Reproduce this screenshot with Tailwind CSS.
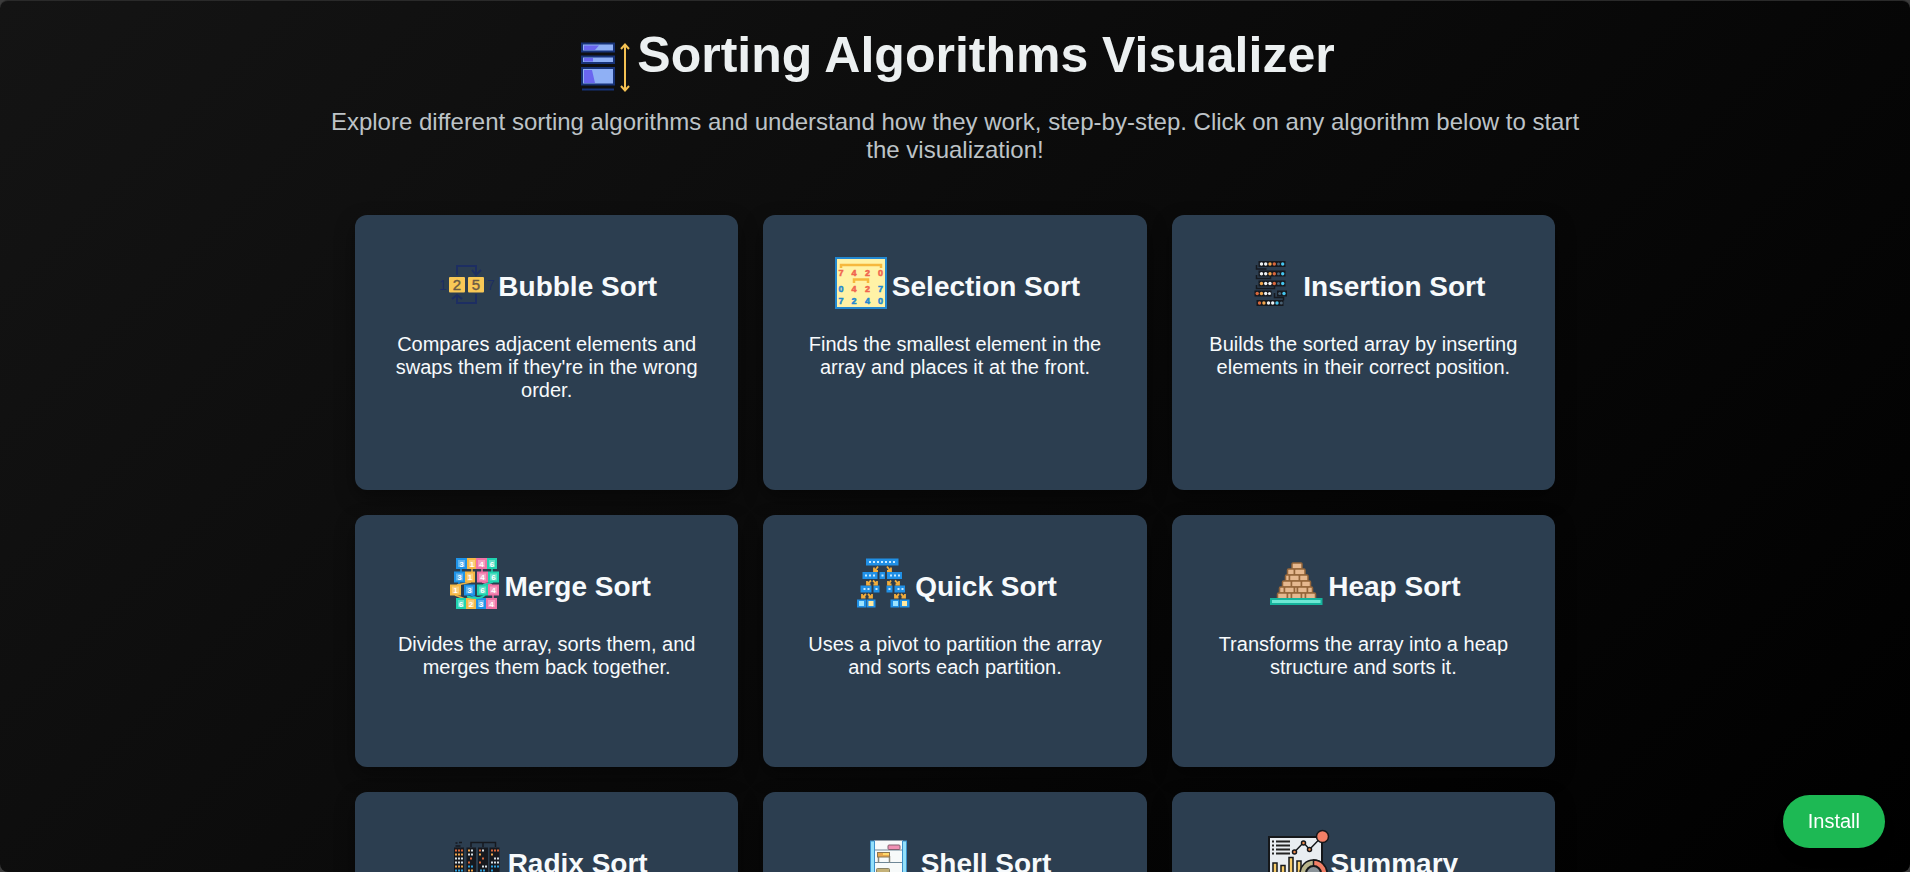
<!DOCTYPE html>
<html lang="en">
<head>
  <meta charset="UTF-8">
  <meta name="viewport" content="width=device-width, initial-scale=1.0">
  <title>Sorting Algorithms Visualizer</title>
  <script src="https://cdn.jsdelivr.net/npm/@tailwindcss/browser@4"></script>
</head>
<body class="bg-[#3c3c3c] font-['Liberation_Sans',Arial,sans-serif]">

  <div class="h-screen overflow-y-auto [scrollbar-width:none] rounded-lg border-t border-[#2a2a2a] bg-[linear-gradient(135deg,#141414,#000000)] px-5 pt-6 pb-10 text-center">

    <header class="mx-auto max-w-[1250px]">
      <h1 class="text-[50px] leading-[60px] font-bold text-[#ecf0f1]"><svg class="inline size-[60px] align-[-24px] mr-0.5" viewBox="0 0 60 60" aria-hidden="true">
          <g fill="#8fb0f5" stroke="#173277" stroke-width="2">
            <rect x="7" y="7.500" width="32" height="8"/>
            <rect x="7" y="20.500" width="32" height="6.500"/>
            <rect x="7" y="32" width="32" height="16.500"/>
          </g>
          <path d="M9 9.500h15l-4 4.500H9zM9 22h9v3.500H9zM9 34h8l3 13H9z" fill="#6a66f0"/>
          <path d="M7 53.500h32" stroke="#173277" stroke-width="2"/>
          <path d="M50 9v45M46 13l4-4.500 4 4.500M46 50l4 4.500 4-4.500" fill="none" stroke="#f4c152" stroke-width="2"/>
        </svg>Sorting Algorithms Visualizer</h1>
      <p class="mt-3 text-[24px] leading-[28px] text-[#bdc3c7]">Explore different sorting algorithms and understand how they work, step-by-step. Click on any algorithm below to start the visualization!</p>
    </header>

    <main class="mx-auto mt-[51px] grid max-w-[1200px] grid-cols-3 gap-[25px] text-[#f7fafc]">

      <a href="#bubble" class="rounded-xl bg-[#2c3e50] px-[35px] pt-[38px] pb-[88px] shadow-[0_8px_20px_rgba(0,0,0,0.4)]">
        <h2 class="text-[28px] leading-8 font-bold"><svg class="inline size-[60px] align-[-17px] mr-0.5" viewBox="0 0 60 60" aria-hidden="true">
            <g fill="none" stroke="#1d2e62" stroke-width="2">
              <path d="M21 22v-9h19v7M36 17l4 5 5-5"/>
              <path d="M40 41v9H21v-7M16 46l5-4 5 4"/>
            </g>
            <rect x="13" y="24" width="16" height="15.500" rx="1" fill="#f9c856"/>
            <rect x="32" y="24" width="16" height="15.500" rx="1" fill="#f9c856"/>
            <g font-size="15" text-anchor="middle" font-weight="normal" fill="#6b5b45" stroke="#6b5b45" stroke-width=".4">
              <text x="21" y="37">2</text>
              <text x="40" y="37">5</text>
            </g>
            <g font-size="14" text-anchor="middle" font-weight="normal" fill="#1d2e62">
              <text x="7" y="37">1</text>
              <text x="55" y="37">7</text>
            </g>
          </svg>Bubble Sort</h2>
        <p class="mt-5 text-[20px] leading-[23px]">Compares adjacent elements and swaps them if they're in the wrong order.</p>
      </a>

      <a href="#selection" class="rounded-xl bg-[#2c3e50] px-[35px] pt-[38px] pb-[88px] shadow-[0_8px_20px_rgba(0,0,0,0.4)]">
        <h2 class="text-[28px] leading-8 font-bold"><svg class="inline size-[60px] align-[-17px] mr-0.5" viewBox="0 0 60 60" aria-hidden="true">
            <rect x="6" y="5" width="50" height="50" fill="#fff2a6" stroke="#2388d0" stroke-width="2"/>
            <path d="M11 15v-3h40v3M24 30v-3.500h14V30" fill="none" stroke="#f6b83d" stroke-width="2.500"/>
            <g font-size="9" font-weight="bold" text-anchor="middle" fill="#f0654f" stroke="#f0654f" stroke-width=".5">
              <text x="11" y="22.500">7</text><text x="24" y="22.500">4</text><text x="37.500" y="22.500">2</text><text x="50.500" y="22.500">0</text>
              <text x="24" y="39">4</text><text x="37.500" y="39">2</text>
            </g>
            <g font-size="9" font-weight="bold" text-anchor="middle" fill="#2388d0" stroke="#2388d0" stroke-width=".5">
              <text x="11" y="39">0</text><text x="50.500" y="39">7</text>
              <text x="11" y="51">7</text><text x="24" y="51">2</text><text x="37.500" y="51">4</text><text x="50.500" y="51">0</text>
            </g>
          </svg>Selection Sort</h2>
        <p class="mt-5 text-[20px] leading-[23px]">Finds the smallest element in the array and places it at the front.</p>
      </a>

      <a href="#insertion" class="rounded-xl bg-[#2c3e50] px-[35px] pt-[38px] pb-[88px] shadow-[0_8px_20px_rgba(0,0,0,0.4)]">
        <h2 class="text-[28px] leading-8 font-bold"><svg class="inline size-[60px] align-[-17px] mr-0.5" viewBox="0 0 60 60" aria-hidden="true">
            <g fill="#16191f">
              <rect x="17.500" y="8" width="27" height="6"/>
              <rect x="17.500" y="17.500" width="27" height="6"/>
              <rect x="17.500" y="27.500" width="27" height="6"/>
              <rect x="13.500" y="37.500" width="17" height="6"/>
              <rect x="36" y="37.500" width="10" height="6"/>
              <rect x="15.500" y="47" width="27" height="6"/>
            </g>
            <path d="M15.500 12v4h10M15.500 22v3.500h14v-3M15.500 32v3.500h18v-3M33.500 40v4.500h9v3" fill="none" stroke="#16191f" stroke-width="1.500"/>
            <g fill="#eef1f3">
              <circle cx="20.500" cy="11" r="1.700"/><circle cx="24.700" cy="11" r="1.700"/>
              <circle cx="20.500" cy="20.700" r="1.700"/><circle cx="24.700" cy="20.700" r="1.700"/>
              <circle cx="24.700" cy="30.500" r="1.700"/><circle cx="29" cy="30.500" r="1.700"/>
              <circle cx="24.700" cy="40.500" r="1.700"/><circle cx="28.500" cy="40.500" r="1.500"/>
              <circle cx="27.500" cy="50" r="1.700"/><circle cx="31.700" cy="50" r="1.700"/>
            </g>
            <g fill="#f1a64d">
              <circle cx="29" cy="11" r="1.700"/><circle cx="29" cy="20.700" r="1.700"/>
              <circle cx="20.500" cy="30.500" r="1.700"/><circle cx="20.500" cy="40.500" r="1.700"/><circle cx="22.900" cy="50" r="1.700"/>
            </g>
            <g fill="#d9683c">
              <circle cx="33.300" cy="11" r="1.700"/><circle cx="33.300" cy="20.700" r="1.700"/>
              <circle cx="33.300" cy="30.500" r="1.700"/><circle cx="16.200" cy="40.500" r="1.700"/><circle cx="18.500" cy="50" r="1.700"/>
            </g>
            <g fill="#4a6275">
              <circle cx="37.500" cy="11" r="1.500"/><circle cx="37.500" cy="20.700" r="1.500"/>
              <circle cx="37.500" cy="30.500" r="1.500"/><circle cx="38.700" cy="40.500" r="1.500"/><circle cx="40.300" cy="50" r="1.500"/>
            </g>
            <g fill="#45c4ee">
              <circle cx="41.700" cy="11" r="1.700"/><circle cx="41.700" cy="20.700" r="1.700"/>
              <circle cx="41.700" cy="30.500" r="1.700"/><circle cx="43" cy="40.500" r="1.700"/><circle cx="36" cy="50" r="1.700"/>
            </g>
          </svg>Insertion Sort</h2>
        <p class="mt-5 text-[20px] leading-[23px]">Builds the sorted array by inserting elements in their correct position.</p>
      </a>

      <a href="#merge" class="rounded-xl bg-[#2c3e50] px-[35px] pt-[38px] pb-[88px] shadow-[0_8px_20px_rgba(0,0,0,0.4)]">
        <h2 class="text-[28px] leading-8 font-bold"><svg class="inline size-[60px] align-[-17px] mr-0.5" viewBox="0 0 60 60" aria-hidden="true">
            <g fill="none" stroke-width="1.500">
              <path d="M28 29l-14 3M29 15v4M12 42l10 4" stroke="#e9b44a"/>
              <path d="M18 15v4M16 29v2M28 42l8 4" stroke="#1e93e8"/>
              <path d="M39 15v4M39 29l10 3M50 42v4" stroke="#f173a6"/>
              <path d="M49 15v4M50 29l-10 3" stroke="#20d3b0"/>
            </g>
            <g fill="#1e93e8">
              <rect x="13" y="5" width="11" height="11"/><rect x="11" y="18.500" width="11" height="11"/>
              <rect x="21" y="31.500" width="11" height="11"/><rect x="33" y="45" width="10" height="11"/>
            </g>
            <g fill="#f6b844">
              <rect x="24" y="5" width="10" height="11"/><rect x="22" y="18.500" width="10" height="11"/>
              <rect x="7" y="31.500" width="11" height="11"/><rect x="23" y="45" width="10" height="11"/>
            </g>
            <g fill="#f173a6">
              <rect x="33" y="5" width="11" height="11"/><rect x="34" y="18.500" width="11" height="11"/>
              <rect x="45" y="31.500" width="11" height="11"/><rect x="43" y="45" width="11" height="11"/>
            </g>
            <g fill="#20d3b0">
              <rect x="44" y="5" width="10" height="11"/><rect x="45" y="18.500" width="11" height="11"/>
              <rect x="34" y="31.500" width="11" height="11"/><rect x="13" y="45" width="10" height="11"/>
            </g>
            <path d="M24 43.500q14 4 18-2" fill="none" stroke="#20d3b0" stroke-width="2"/>
            <g fill="#fff" fill-opacity=".3">
              <path d="M15 7h7v7h-7zM26 7h6v7h-6zM35 7h7v7h-7zM46 7h6v7h-6z"/>
              <path d="M13 20.500h7v7h-7zM24 20.500h6v7h-6zM36 20.500h7v7h-7zM47 20.500h7v7h-7z"/>
              <path d="M9 33.500h7v7H9zM23 33.500h7v7h-7zM36 33.500h7v7h-7zM47 33.500h7v7h-7z"/>
              <path d="M15 47h6v7h-6zM25 47h6v7h-6zM35 47h6v7h-6zM45 47h7v7h-7z"/>
            </g>
            <g font-size="8" font-weight="bold" text-anchor="middle" fill="#fff">
              <text x="18.500" y="13.500">3</text><text x="29" y="13.500">1</text><text x="38.500" y="13.500">4</text><text x="49" y="13.500">6</text>
              <text x="16.500" y="27">3</text><text x="27" y="27">1</text><text x="39.500" y="27">4</text><text x="50.500" y="27">6</text>
              <text x="12.500" y="40">1</text><text x="26.500" y="40">3</text><text x="39.500" y="40">6</text><text x="50.500" y="40">4</text>
              <text x="18" y="53.500">6</text><text x="28" y="53.500">2</text><text x="38" y="53.500">3</text><text x="48.500" y="53.500">4</text>
            </g>
          </svg>Merge Sort</h2>
        <p class="mt-5 text-[20px] leading-[23px]">Divides the array, sorts them, and merges them back together.</p>
      </a>

      <a href="#quick" class="rounded-xl bg-[#2c3e50] px-[35px] pt-[38px] pb-[88px] shadow-[0_8px_20px_rgba(0,0,0,0.4)]">
        <h2 class="text-[28px] leading-8 font-bold"><svg class="inline size-[60px] align-[-17px] mr-0.5" viewBox="0 0 60 60" aria-hidden="true">
            <g fill="#2090e6">
              <path d="M13 5.500h32.500v7H13z"/>
              <path d="M9.500 19h15v7h-15zM26.500 19h5.500v7h-5.500zM34 19h15v7H34z"/>
              <path d="M7.500 32.500h11v7h-11zM20.500 32.500h6v7h-6zM33.500 32.500h6v7h-6zM41.500 32.500h10.500v7H41.500z"/>
              <path d="M4 46.500h9v8H4zM13.500 46.500h9v8h-9zM37.500 46.500h9v8h-9zM47 46.500h9.500v8H47z"/>
            </g>
            <g stroke="#c6eaff" stroke-width="2" stroke-dasharray="2 2">
              <path d="M16 9h27M12 22.500h11M28.500 22.500h2M37 22.500h11M10.500 36h7M22.500 36h2M35.500 36h2M44.500 36h6"/>
            </g>
            <g fill="#9be3ff"><path d="M6 48h5v5H6zM40 48h5v5h-5z"/></g>
            <g fill="#ffe9a0"><path d="M15.500 48h5v5h-5zM49 48h5v5h-5z"/></g>
            <g fill="none" stroke="#f2ad3c" stroke-width="1.800">
              <path d="M25 13.500l-3 4M21 14.500v3.500h4M34 13.500l3 4M38 14.500v3.500h-4"/>
              <path d="M18 27.500l-3 3M14 28v3.500h3.500M20 27.500l3 3M24 28v3.500h-3.500M38 27.500l-2 3M35 28v3.500h3.500M42 27.500l3 3M46 28v3.500h-3.500"/>
              <path d="M13 41l-3 3M9 41v3.500h3.500M15 41l3 3M19 41v3.500h-3.500M46 41l-3 3M42 41v3.500h3.500M48 41l3 3M52 41v3.500h-3.500"/>
            </g>
          </svg>Quick Sort</h2>
        <p class="mt-5 text-[20px] leading-[23px]">Uses a pivot to partition the array and sorts each partition.</p>
      </a>

      <a href="#heap" class="rounded-xl bg-[#2c3e50] px-[35px] pt-[38px] pb-[88px] shadow-[0_8px_20px_rgba(0,0,0,0.4)]">
        <h2 class="text-[28px] leading-8 font-bold"><svg class="inline size-[60px] align-[-17px] mr-0.5" viewBox="0 0 60 60" aria-hidden="true">
            <g fill="#e6b88f" stroke="#94653a" stroke-width="1.500">
              <rect x="26" y="10" width="10" height="6" rx="1"/>
              <rect x="21.500" y="16" width="7" height="6" rx="1"/><rect x="28.500" y="16" width="10.500" height="6" rx="1"/>
              <rect x="19.500" y="22" width="4" height="6" rx="1"/><rect x="23.500" y="22" width="10" height="6" rx="1"/><rect x="33.500" y="22" width="8.500" height="6" rx="1"/>
              <rect x="16.500" y="28" width="9" height="6" rx="1"/><rect x="25.500" y="28" width="10" height="6" rx="1"/><rect x="35.500" y="28" width="9" height="6" rx="1"/>
              <rect x="13.500" y="34" width="5" height="6" rx="1"/><rect x="18.500" y="34" width="10" height="6" rx="1"/><rect x="28.500" y="34" width="3" height="6" rx="1"/><rect x="31.500" y="34" width="10" height="6" rx="1"/><rect x="41.500" y="34" width="5" height="6" rx="1"/>
              <rect x="11.500" y="40" width="10" height="6" rx="1"/><rect x="21.500" y="40" width="4" height="6" rx="1"/><rect x="25.500" y="40" width="10" height="6" rx="1"/><rect x="35.500" y="40" width="4" height="6" rx="1"/><rect x="39.500" y="40" width="10" height="6" rx="1"/>
            </g>
            <rect x="5" y="46" width="50.500" height="5" fill="#6ee8d4" stroke="#16b39c" stroke-width="2"/>
          </svg>Heap Sort</h2>
        <p class="mt-5 text-[20px] leading-[23px]">Transforms the array into a heap structure and sorts it.</p>
      </a>

      <a href="#radix" class="rounded-xl bg-[#2c3e50] px-[35px] pt-[38px] pb-[88px] shadow-[0_8px_20px_rgba(0,0,0,0.4)]">
        <h2 class="text-[28px] leading-8 font-bold"><svg class="inline size-[60px] align-[-17px] mr-0.5" viewBox="0 0 60 60" aria-hidden="true">
            <path d="M25 17v-4.500h24.500V17M37 12.500V17M9.500 13h2M13 12.500h3M9.500 16h5" fill="none" stroke="#16191f" stroke-width="1.500"/>
            <path d="M8 17.500h10V54H8zM20.500 17.500h9.500V54h-9.500zM32 17.500h10V54H32zM43.500 17.500h10V54h-10z" fill="#16191f"/>
            <g fill="none" stroke-width="2" stroke-dasharray="2 1">
              <path d="M9 20.500h8M33 20.500h3M45 20.500h8M24 28.500h3M36 28.500h3M22 32.500h3M33 32.500h3" stroke="#d9683c"/>
              <path d="M9 24.500h8M22 20.500h3M45 24.500h3M33 24.500h3M9 36.500h8M22 40.500h6" stroke="#f1a64d"/>
              <path d="M9 28.500h8M9 32.500h8M25 20.500h3M36 20.500h3M22 24.500h5M48 28.500h5M45 32.500h8M36 36.500h5M22 44.500h6" stroke="#d7dfe4"/>
              <path d="M9 40.500h8M22 36.500h5M34 40.500h6M45 36.500h8M45 40.500h3" stroke="#2ea0dc"/>
              <path d="M9 44.500h8M9 48.500h8M34 44.500h6M45 44.500h8M22 48.500h6" stroke="#4a6275"/>
            </g>
          </svg>Radix Sort</h2>
        <p class="mt-5 text-[20px] leading-[23px]">Sorts numbers digit by digit, from the least significant one.</p>
      </a>

      <a href="#shell" class="rounded-xl bg-[#2c3e50] px-[35px] pt-[38px] pb-[88px] shadow-[0_8px_20px_rgba(0,0,0,0.4)]">
        <h2 class="text-[28px] leading-8 font-bold"><svg class="inline size-[60px] align-[-17px] mr-0.5" viewBox="0 0 60 60" aria-hidden="true">
            <rect x="15" y="10.500" width="29" height="46" fill="#f7fafa"/>
            <path d="M15 20h29M15 32.500h29M15 45h29" stroke="#6e8797" stroke-width="1"/>
            <g fill="#93e0fa" stroke="#3c91cc" stroke-width="1">
              <rect x="11.500" y="11" width="4" height="46"/><rect x="43.500" y="11" width="4" height="46"/>
            </g>
            <rect x="29" y="15" width="12" height="4.500" rx="1" fill="#f091b4" stroke="#84606f"/>
            <path d="M19.500 26v6.500M30.500 26v6.500" stroke="#8a8a80" stroke-width="1.500"/>
            <rect x="18.500" y="22.500" width="12" height="4.500" fill="#e9a84c" stroke="#8b7651"/>
            <path d="M24 24h6" stroke="#ffda6c" stroke-width="2"/>
            <rect x="17.500" y="38.500" width="13" height="6" rx="1" fill="#c4b178" stroke="#8b8466"/>
          </svg>Shell Sort</h2>
        <p class="mt-5 text-[20px] leading-[23px]">Compares distant elements first, then narrows the gap.</p>
      </a>

      <a href="#summary" class="rounded-xl bg-[#2c3e50] px-[35px] pt-[38px] pb-[88px] shadow-[0_8px_20px_rgba(0,0,0,0.4)]">
        <h2 class="text-[28px] leading-8 font-bold"><svg class="inline size-[60px] overflow-visible align-[-17px] mr-0.5" viewBox="0 0 60 60" aria-hidden="true">
            <rect x="0" y="7" width="53" height="43" fill="#e9edf1" stroke="#15171a" stroke-width="2"/>
            <path d="M3 11.500h2M7 11.500h14M3 15.500h2M7 15.500h14M3 19.500h2M7 19.500h14M3 23.500h2M7 23.500h14" stroke="#222" stroke-width="2"/>
            <path d="M25.500 22l9-9.500 6 7L53 6.500" fill="none" stroke="#15171a" stroke-width="1.500"/>
            <g fill="#f08a4b" stroke="#15171a" stroke-width="1.500">
              <circle cx="25.500" cy="22" r="2"/><circle cx="34.500" cy="13" r="2"/><circle cx="40.500" cy="19.500" r="2"/>
            </g>
            <circle cx="53.500" cy="6.500" r="6" fill="#f37f66" stroke="#15171a" stroke-width="1.500"/>
            <g fill="#f8cd6b" stroke="#15171a" stroke-width="1.500">
              <rect x="4" y="33" width="4" height="15"/><rect x="12" y="35.500" width="4" height="13"/>
              <rect x="20" y="27.500" width="4" height="21"/><rect x="28" y="31" width="4" height="17"/>
            </g>
            <circle cx="44.500" cy="43.500" r="13.500" fill="#b8b48b" stroke="#15171a" stroke-width="1.500"/>
            <path d="M44.500 30a13.500 13.500 0 0 1 13.500 13.500H44.500z" fill="#f37f66" stroke="#15171a" stroke-width="1.500"/>
            <circle cx="44.500" cy="43.500" r="7.500" fill="#8b9399" stroke="#15171a" stroke-width="2"/>
          </svg>Summary</h2>
        <p class="mt-5 text-[20px] leading-[23px]">An overview of all the sorting algorithms.</p>
      </a>

    </main>
  </div>

  <!-- install button stays over the cards -->
  <button type="button" class="fixed right-[25px] bottom-6 rounded-full bg-[#1db954] px-[25px] py-[15px] text-[20px] leading-[23px] text-white shadow-lg">Install</button>

</body>
</html>
